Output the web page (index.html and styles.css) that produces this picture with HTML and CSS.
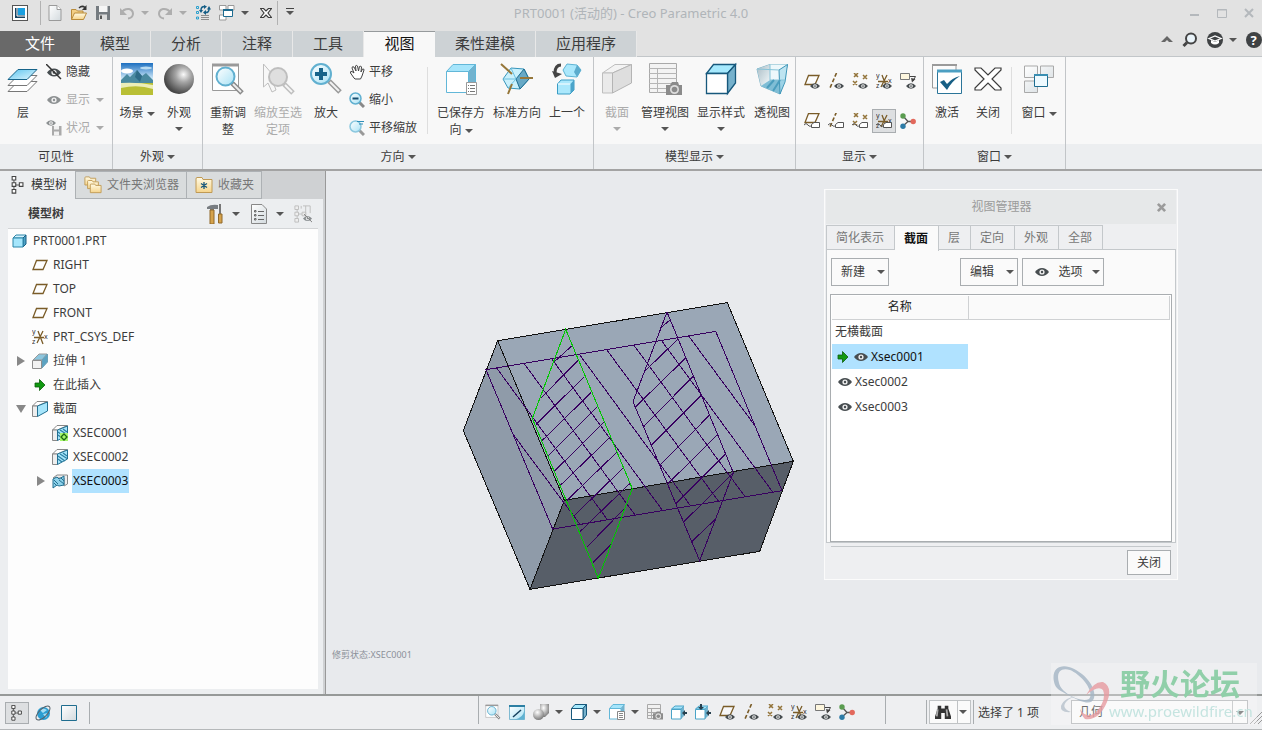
FILE: index.html
```html
<!DOCTYPE html>
<html lang="zh-CN">

<head>
    <meta charset="UTF-8">
    <meta name="viewport" content="width=device-width, initial-scale=1.0">
    <title>PRT0001 (活动的) - Creo Parametric 4.0</title>
    <link rel="stylesheet" href="styles.css">
</head>

<body>
    <!-- icons -->
    <svg class="sprite" aria-hidden="true">
        <defs>
            <linearGradient id="gBlue" x1="0" y1="0" x2="1" y2="1">
                <stop offset="0" stop-color="#5bc4ee"/><stop offset="1" stop-color="#e2f7ff"/>
            </linearGradient>
            <linearGradient id="gGlass" x1="0" y1="0" x2="1" y2="1">
                <stop offset="0" stop-color="#ffffff"/><stop offset="1" stop-color="#a9e2f5"/>
            </linearGradient>
            <linearGradient id="gPaper" x1="0" y1="0" x2="1" y2="1">
                <stop offset="0" stop-color="#ffffff"/><stop offset="1" stop-color="#d3dade"/>
            </linearGradient>
            <linearGradient id="gFolder" x1="0" y1="0" x2="0" y2="1">
                <stop offset="0" stop-color="#fffbe6"/><stop offset="1" stop-color="#f6d48a"/>
            </linearGradient>
            <linearGradient id="gSky" x1="0" y1="0" x2="0" y2="1">
                <stop offset="0" stop-color="#1c6fc0"/><stop offset="0.5" stop-color="#d4ecfa"/>
            </linearGradient>
            <linearGradient id="gBack" x1="0" y1="0" x2="1" y2="1">
                <stop offset="0" stop-color="#a9bcc5"/><stop offset="1" stop-color="#f2f9fb"/>
            </linearGradient>
            <radialGradient id="gBall" cx="0.65" cy="0.35" r="0.65">
                <stop offset="0" stop-color="#fafafa"/><stop offset="0.4" stop-color="#a5a5a5"/><stop offset="1" stop-color="#484848"/>
            </radialGradient>
            <radialGradient id="gBall2" cx="0.4" cy="0.3" r="0.7">
                <stop offset="0" stop-color="#ffffff"/><stop offset="1" stop-color="#7c7c7c"/>
            </radialGradient>
        </defs>

        <symbol id="eye" viewBox="0 0 14 8">
            <path d="M0 4Q3 0 7 0T14 4Q11 8 7 8T0 4Z" fill="#474d50"/>
            <circle cx="7" cy="4" r="2.6" fill="#eee"/><circle cx="7" cy="4" r="1.2" fill="#474d50"/>
        </symbol>
        <symbol id="tag" viewBox="0 0 16 8">
            <path d="M0 4Q2 1 4 4T9 3" fill="none" stroke="#555" stroke-width="1"/>
            <path d="M7.500 3.500L10 1.500H15.500V6.500H7.500Z" fill="#fff" stroke="#555"/>
        </symbol>
        <symbol id="logo" viewBox="0 0 16 16">
            <rect x="0.500" y="0.500" width="15" height="15" fill="#fff" stroke="#555"/>
            <rect x="3" y="3" width="10" height="10" fill="#17415e"/><path d="M6 3H13V10H6Z" fill="#1a9fe0"/><path d="M5 3V11H13" fill="none" stroke="#fff"/>
        </symbol>
        <symbol id="new" viewBox="0 0 16 16">
            <path d="M2 .5H10L14 4.500V15.500H2Z" fill="url(#gPaper)" stroke="#9a9a9a"/><path d="M10 .5V4.500H14" fill="#fff" stroke="#9a9a9a"/>
        </symbol>
        <symbol id="open" viewBox="0 0 16 16">
            <path d="M.5 14.500V4.500H5L6.500 6H12V8" fill="#f2cf86" stroke="#b98b3b"/>
            <path d="M.5 14.500L3.500 8H15.500L12.500 14.500Z" fill="url(#gFolder)" stroke="#b98b3b"/>
            <path d="M8 3Q11 0 14 2.500" fill="none" stroke="#333" stroke-width="1.500"/><path d="M15.500 0V5H11Z" fill="#333"/>
        </symbol>
        <symbol id="save" viewBox="0 0 16 16">
            <path d="M1 1H15V15H1Z" fill="#757b80"/><path d="M4 1H12.500V7H4Z" fill="#f6f6f6"/><path d="M4 9.500H12V15H4Z" fill="#dcdcdc"/><path d="M5 10.500H7V14H5Z" fill="#555"/>
        </symbol>
        <symbol id="undo" viewBox="0 0 16 16">
            <path d="M2 8Q5 3.500 10 4Q14 5 14 9Q13.500 13 9 13.500" fill="none" stroke="#8c8c8c" stroke-width="2"/><path d="M1 3V10H8Z" fill="#8c8c8c"/>
        </symbol>
        <symbol id="redo" viewBox="0 0 16 16">
            <path d="M14 8Q11 3.500 6 4Q2 5 2 9Q2.500 13 7 13.500" fill="none" stroke="#8c8c8c" stroke-width="2"/><path d="M15 3V10H8Z" fill="#8c8c8c"/>
        </symbol>
        <symbol id="regen" viewBox="0 0 16 16">
            <path d="M1.500 1.500H3.500V3.500H1.500ZM1.500 6.500H3.500V8.500H1.500ZM1.500 12H3.500V14H1.500Z" fill="none" stroke="#2aa0cf"/>
            <path d="M6 10.500H14M6 14.500H14M6 12.500H14" stroke="#8d8d8d"/>
            <path d="M6 5Q6 1.500 9.500 1.500M14 4Q14 8 10 7.500" fill="none" stroke="#155e86" stroke-width="1.500"/><path d="M9 0L12 1.500L9 4ZM11 5L8 7.500L11 10ZM4 5H8L6 8ZM12 4.500H16L14 1Z" fill="#155e86"/>
        </symbol>
        <symbol id="wins" viewBox="0 0 16 16">
            <path d="M.5 .5H7V5H.5ZM9 .5H15V5H9ZM.5 10H7V15H.5Z" fill="#fff" stroke="#999"/>
            <path d="M4.500 4.500H13.500V11.500H4.500Z" fill="#fff" stroke="#1d6c90"/><path d="M4 5H14" stroke="#1d6c90" stroke-width="2"/>
        </symbol>
        <symbol id="cross" viewBox="0 0 34 34">
            <path d="M4 6H10L17 13L24 6H30V8L21 17L30 26V28H24L17 21L10 28H4V26L13 17L4 8Z" fill="#fff" stroke="#3c3c3c" stroke-width="1.200"/>
        </symbol>
        <symbol id="crossSmall" viewBox="0 0 12 10">
            <path d="M.5 .5H3.500L6 3L8.500 .5H11.500L8 5L11.500 9.500H8.500L6 7L3.500 9.500H.5L4 5Z" fill="#fff" stroke="#3c3c3c" stroke-width="1.200"/>
        </symbol>
        <symbol id="up" viewBox="0 0 12 12"><path d="M0 8L6 2L12 8H8L6 6L4 8Z" fill="#666"/></symbol>
        <symbol id="search" viewBox="0 0 16 16"><circle cx="9" cy="6.500" r="5" fill="#eaf4fa" stroke="#444" stroke-width="2"/><path d="M5 10.500L1.500 14" stroke="#444" stroke-width="3"/></symbol>
        <symbol id="learn" viewBox="0 0 16 16">
            <circle cx="8" cy="8" r="8" fill="#3f4244"/><path d="M2 6.500L8 4L14 6.500L8 9Z" fill="none" stroke="#fff" stroke-width="1.300"/><path d="M4 8V11Q8 14 12 11V8L8 10Z" fill="#fff"/>
        </symbol>
        <symbol id="help" viewBox="0 0 16 16"><circle cx="8" cy="8" r="8" fill="#3f4244"/><text x="4.500" y="13" font-size="13" font-weight="bold" fill="#fff">?</text></symbol>

        <symbol id="layers" viewBox="0 0 34 34">
            <path d="M12 19.500H31L21 29.500H2Z" fill="#fff" stroke="#777"/>
            <path d="M12 13.500H31L21 23.500H2Z" fill="#fff" stroke="#777"/>
            <path d="M12 7.500H31L21 17.500H2Z" fill="url(#gBlue)" stroke="#17648a"/>
        </symbol>
        <symbol id="hide" viewBox="0 0 16 16"><use href="#eye" x="1" y="4" width="14" height="9"/><path d="M0 0L15 15" stroke="#333" stroke-width="1.500"/></symbol>
        <symbol id="show" viewBox="0 0 16 16"><use href="#eye" x="1" y="4" width="14" height="8"/></symbol>
        <symbol id="status" viewBox="0 0 16 16"><use href="#eye" x="0" y="0" width="10" height="6"/><path d="M6 6H15.500V15.500H6Z" fill="#777"/><path d="M8 6H13V9.500H8ZM8 11.500H13V15.500H8Z" fill="#eee"/></symbol>
        <symbol id="scene" viewBox="0 0 34 34">
            <path d="M1 1H33V33H1Z" fill="url(#gSky)"/><ellipse cx="7" cy="9" rx="6" ry="2.500" fill="#fff"/><ellipse cx="26" cy="6" rx="6" ry="1.500" fill="#b9dcf2"/>
            <path d="M1 18L7 12L10 15L17 8L22 14L26 11L33 18V22H1Z" fill="#4a8aa0"/><path d="M17 8L22 14L20 20L15 15Z" fill="#2e6b87"/>
            <path d="M1 21H33V33H1Z" fill="#b9bf35"/><path d="M1 21Q18 20 33 23V27Q18 22 1 26Z" fill="#eceeb8"/>
        </symbol>
        <symbol id="sphere" viewBox="0 0 34 34"><circle cx="17" cy="17" r="15" fill="url(#gBall)"/></symbol>
        <symbol id="refit" viewBox="0 0 34 34">
            <path d="M1.500 2.500H27.500V28.500H1.500Z" fill="#fff" stroke="#9a9a9a"/><path d="M1 3H28" stroke="#9a9a9a" stroke-width="3"/>
            <path d="M21 21L31 31" stroke="#8a8a8a" stroke-width="5"/><path d="M22 22L30 30" stroke="#eee" stroke-width="2"/>
            <circle cx="14.500" cy="14.500" r="9" fill="url(#gGlass)" stroke="#61b0d0" stroke-width="2"/>
        </symbol>
        <symbol id="zoomsel" viewBox="0 0 34 34">
            <path d="M2.500 2V25L7 21L11 30L15 28L12 20H18Z" fill="#f7f7f7" stroke="#999"/>
            <path d="M23 22L32 31" stroke="#999" stroke-width="5"/><path d="M24 23L31 30" stroke="#f5f5f5" stroke-width="2"/>
            <circle cx="17" cy="15" r="9" fill="#cfcfcf" stroke="#999" stroke-width="2"/>
        </symbol>
        <symbol id="zoomin" viewBox="0 0 34 34">
            <path d="M20 19L31 30" stroke="#999" stroke-width="5"/><path d="M21 20L30 29" stroke="#f2f2f2" stroke-width="2"/>
            <circle cx="12" cy="12" r="10" fill="url(#gGlass)" stroke="#61b0d0" stroke-width="2"/><path d="M12 6V18M6 12H18" stroke="#17648a" stroke-width="4"/>
        </symbol>
        <symbol id="hand" viewBox="0 0 16 16">
            <path d="M5 14L1.500 9Q1 7 3 7.500L5 9L3 4Q3 2 5 3L7 7L6.500 2Q7 .5 8.500 2L9.500 7L10.500 2.500Q12 1.500 12.500 3L12 8L13.500 5Q15 4.500 15 6L13 12L11.500 15H6Z" fill="#fff" stroke="#444"/>
        </symbol>
        <symbol id="zoomout" viewBox="0 0 16 16">
            <path d="M10 10L15 15" stroke="#888" stroke-width="3"/><circle cx="6.500" cy="6.500" r="5.500" fill="url(#gGlass)" stroke="#61b0d0" stroke-width="1.500"/><path d="M3.500 6.500H9.500" stroke="#174f70" stroke-width="2"/>
        </symbol>
        <symbol id="panzoom" viewBox="0 0 16 16">
            <path d="M10 10L15 15" stroke="#999" stroke-width="3"/><circle cx="6.500" cy="6.500" r="5.500" fill="url(#gGlass)" stroke="#8cc8df" stroke-width="1.500"/><path d="M8 1.500H15M10 4H14" stroke="#2f8fb8"/>
        </symbol>
        <symbol id="list" viewBox="0 0 11 13"><path d="M.5 .5H10.500V12.500H.5Z" fill="#fff" stroke="#999"/><path d="M2 3.500H3M2 6.500H3M2 9.500H3M4 3.500H9M4 6.500H9M4 9.500H9" stroke="#777"/></symbol>
        <symbol id="saved" viewBox="0 0 34 34">
            <path d="M2.500 9.500L9 2.500H31.500L24.500 9.500Z" fill="#a6e5fb" stroke="#62b7d8"/><path d="M24.500 9.500L31.500 2.500V23L24.500 30.500Z" fill="#72b3cf" stroke="#62b7d8"/>
            <path d="M2.500 9.500H24.500V30.500H2.500Z" fill="#fff" stroke="#62b7d8"/><use href="#list" x="22" y="20" width="11" height="13"/>
        </symbol>
        <symbol id="savedSmall" viewBox="0 0 16 16">
            <path d="M.5 4.500L4 .5H15.500L12 4.500Z" fill="#a6e5fb" stroke="#62b7d8"/><path d="M12 4.500L15.500 .5V9H12Z" fill="#72b3cf"/><path d="M.5 4.500H12V15H.5Z" fill="#fff" stroke="#62b7d8"/>
            <path d="M8.500 7.500H15.500V15.500H8.500Z" fill="#fff" stroke="#888"/><path d="M10 9.500H14M10 11.500H14M10 13.500H14" stroke="#888"/>
        </symbol>
        <symbol id="stdview" viewBox="0 0 34 34">
            <path d="M3 17L11 6L24 7L29 17L20 27L8 26Z" fill="#c9f0fc" stroke="#3795bb"/><path d="M16 17L24 7L29 17L20 27Z" fill="#67a9c6" stroke="#1d6c90"/><path d="M3 17L16 17L11 6M8 26L16 17" fill="none" stroke="#6cc0df"/>
            <path d="M1 2L12 12M20 16H33M12 22L8 32" stroke="#96773a" stroke-width="2"/>
        </symbol>
        <symbol id="prev" viewBox="0 0 34 34">
            <path d="M13 8L17 2L27 3L31 8L27 15L16 14Z" fill="#abe8fc" stroke="#5fb4d4"/><path d="M27 3L31 8L27 15L24 10Z" fill="#5caccd"/>
            <path d="M7.500 22L11 18H24V28L20 32H7.500Z" fill="#abe8fc" stroke="#3a9cc4"/><path d="M20.500 22L24 18V28L20.500 31.500Z" fill="#4ba4ca"/><path d="M8 22H20" stroke="#fff"/>
            <path d="M11 3Q5 3 5 11" fill="none" stroke="#444" stroke-width="3"/><path d="M2 9L12 12L5 16Z" fill="#444"/>
        </symbol>
        <symbol id="section" viewBox="0 0 34 34">
            <path d="M2.500 11L15 2.500H31.500L12.500 11Z" fill="#f0f0f0" stroke="#999"/><path d="M2.500 11H12.500V31H2.500Z" fill="#e2e2e2" stroke="#999"/><path d="M12.500 11L31.500 2.500V21L12.500 31Z" fill="#cdcdcd" stroke="#888"/>
        </symbol>
        <symbol id="camera" viewBox="0 0 16 13"><path d="M0 3H4L6 0H12L13 3H16V13H0Z" fill="#8b8b8b"/><circle cx="8.500" cy="7.500" r="4.500" fill="#dedede"/><circle cx="8.500" cy="7.500" r="2.800" fill="#8b8b8b"/></symbol>
        <symbol id="viewmgr" viewBox="0 0 34 34">
            <path d="M1.500 1.500H28.500V30.500H1.500Z" fill="#f3f3f3" stroke="#a9a9a9"/><path d="M1 6.500H29M1 11.500H29M1 16.500H29M1 21.500H29M1 26.500H29M9.500 6V31" stroke="#b5b5b5"/>
            <use href="#camera" x="18" y="20" width="16" height="13"/>
        </symbol>
        <symbol id="viewmgrSmall" viewBox="0 0 16 16">
            <path d="M.5 .5H13.500V14.500H.5ZM0 4.500H14M0 8.500H14M0 11.500H14M4.500 4V15" fill="#f0f0f0" stroke="#a9a9a9"/><use href="#camera" x="6" y="7" width="10" height="9"/>
        </symbol>
        <symbol id="cube" viewBox="0 0 34 34">
            <path d="M2.500 11.500L9.500 2.500H31.500L23.500 11.500Z" fill="#a6e9fd" stroke="#17587c" stroke-width="1.300"/><path d="M23.500 11.500L31.500 2.500V21L23.500 31.500Z" fill="#76b1cc" stroke="#17587c" stroke-width="1.300"/><path d="M2.500 11.500H23.500V31.500H2.500Z" fill="#fff" stroke="#17587c" stroke-width="1.300"/>
        </symbol>
        <symbol id="cubeSmall" viewBox="0 0 16 16">
            <path d="M.5 4.500L4 .5H15.500L12 4.500Z" fill="#a6e9fd" stroke="#17587c"/><path d="M12 4.500L15.500 .5V11L12 15.500Z" fill="#76b1cc" stroke="#17587c"/><path d="M.5 4.500H12V15.500H.5Z" fill="#fff" stroke="#17587c"/>
        </symbol>
        <symbol id="persp" viewBox="0 0 34 34">
            <path d="M2 7L15 2.500H32.500L25 32L6 24Z" fill="#e9f6fa" stroke="#79b3c8"/><path d="M2 7L15 2.500V18L6 24Z" fill="url(#gBack)"/><path d="M15 2.500H32V18H15Z" fill="#edf8fb"/><path d="M6 24L15 18H30L25 32Z" fill="#7fbdd5"/>
            <path d="M24 8L32.500 2.500L30 20L25 32Z" fill="#a8dcec" fill-opacity="0.700" stroke="#3f96b8"/><path d="M2 7L24 8M15 2.500V18H30" fill="none" stroke="#86c3d8"/><path d="M12 26L19 18M18 29L25 18" stroke="#4b9dbd" stroke-width="2"/>
        </symbol>
        <symbol id="activate" viewBox="0 0 34 34">
            <path d="M2.500 3H26V26H2.500Z" fill="#fbfbfb" stroke="#9a9a9a"/><path d="M2 3H27" stroke="#9a9a9a" stroke-width="2"/>
            <path d="M7.500 8.500H31.500V31.500H7.500Z" fill="#fff" stroke="#2b7599"/><path d="M7 9H32" stroke="#4c9fc2" stroke-width="3"/><path d="M10 20L14 18L17 22Q22 16 30 14Q22 19 17 28Z" fill="#175f85"/>
        </symbol>
        <symbol id="windows" viewBox="0 0 34 34">
            <path d="M2.500 4H15.500V15.500H2.500ZM18.500 4H31.500V15.500H18.500ZM2.500 19H15.500V30.500H2.500Z" fill="url(#gPaper)" stroke="#a9a9a9"/>
            <path d="M12.500 13H25.500V24.500H12.500Z" fill="#eefaff" stroke="#1d6c90"/><path d="M12 13H26" stroke="#3a8fb3" stroke-width="2"/>
        </symbol>

        <!-- datum display icons -->
        <symbol id="plane" viewBox="0 0 16 16"><path d="M4.500 3.500H15L11 12.500H1Z" fill="#fff" fill-opacity="0.500" stroke="#7a5c28" stroke-width="1.300"/></symbol>
        <symbol id="axis" viewBox="0 0 16 16"><path d="M8.500 0L2 15" stroke="#7a5c28" stroke-width="1.600" stroke-dasharray="4 2"/></symbol>
        <symbol id="points" viewBox="0 0 16 16"><path d="M2 0L6 4M6 0L2 4M11 2L15 6M15 2L11 6M1 8L5 12M5 8L1 12" stroke="#93743a" stroke-width="1.500"/></symbol>
        <symbol id="csys" viewBox="0 0 16 16">
            <path d="M2 8.500H12M6 2L11 15M11 2L5 14" stroke="#7a5c28" stroke-width="1.300"/>
            <text x="0" y="5" font-size="7" fill="#333">y</text><text x="12" y="10" font-size="7" fill="#333">x</text><text x="0" y="15" font-size="7" fill="#333">z</text>
        </symbol>
        <symbol id="anno" viewBox="0 0 16 16"><path d="M.5 .5H9.500V6.500H.5Z" fill="#fdf6de" stroke="#777"/><path d="M10 3.500H15.500L13 8" fill="none" stroke="#444"/><path d="M11 5L15.500 6L12 9.500Z" fill="#444"/></symbol>
        <symbol id="planeEye" viewBox="0 0 16 16"><use href="#plane" y="-1" width="16" height="16"/><use href="#eye" x="6" y="10" width="10" height="6"/></symbol>
        <symbol id="axisEye" viewBox="0 0 16 16"><use href="#axis" width="16" height="16"/><use href="#eye" x="6" y="10" width="10" height="6"/></symbol>
        <symbol id="pointsEye" viewBox="0 0 16 16"><use href="#points" width="16" height="16"/><use href="#eye" x="6" y="10" width="10" height="6"/></symbol>
        <symbol id="csysEye" viewBox="0 0 16 16"><use href="#csys" width="16" height="16"/><use href="#eye" x="6" y="10" width="10" height="6"/></symbol>
        <symbol id="annoEye" viewBox="0 0 16 16"><use href="#anno" width="16" height="16"/><use href="#eye" x="6" y="10" width="10" height="6"/></symbol>
        <symbol id="planeTag" viewBox="0 0 16 16"><use href="#plane" y="-3" width="16" height="16"/><use href="#tag" y="8" width="16" height="8"/></symbol>
        <symbol id="axisTag" viewBox="0 0 16 16"><use href="#axis" y="-1" width="16" height="16"/><use href="#tag" y="8" width="16" height="8"/></symbol>
        <symbol id="pointsTag" viewBox="0 0 16 16"><use href="#points" width="16" height="16"/><use href="#tag" y="8" width="16" height="8"/></symbol>
        <symbol id="csysTag" viewBox="0 0 16 16"><use href="#csys" width="16" height="16"/><use href="#tag" y="8" width="16" height="8"/></symbol>
        <symbol id="spin" viewBox="0 0 16 16"><path d="M3 3L8 8.500L3 13M8 8.500H13" fill="none" stroke="#555" stroke-width="1.300"/><circle cx="3" cy="3" r="2.700" fill="#5a9c50"/><circle cx="13.200" cy="8.500" r="2.700" fill="#e2685c"/><circle cx="3" cy="13.300" r="2.700" fill="#2d7ba6"/></symbol>

        <!-- navigator icons -->
        <symbol id="nodes" viewBox="0 0 16 20"><path d="M3.500 3V17M4 10H11" stroke="#444"/><path d="M1.500 .5H5.500V4.500H1.500ZM1.500 7.500H5.500V11.500H1.500ZM1.500 15H5.500V19H1.500ZM9.500 7.500H13.500V11.500H9.500Z" fill="#fff" stroke="#444" stroke-width="1.200"/></symbol>
        <symbol id="folders" viewBox="0 0 20 20">
            <path d="M1 10V2Q1 1 2 1H6L7 2.500H13V10Z" fill="url(#gFolder)" stroke="#c09a55"/><path d="M4 14V6Q4 5 5 5H9L10 6.500H16V14Z" fill="url(#gFolder)" stroke="#c09a55"/><path d="M7 18.500V10Q7 9 8 9H12L13 10.500H19V18.500Z" fill="url(#gFolder)" stroke="#c09a55"/>
        </symbol>
        <symbol id="fav" viewBox="0 0 18 18"><path d="M1 16.500V3Q1 1.500 2 1.500H7L8 3.500H17V16.500Z" fill="url(#gFolder)" stroke="#c09a55"/><path d="M9 6V13M6 7.500L12 11.500M12 7.500L6 11.500" stroke="#17587c" stroke-width="1.300"/></symbol>
        <symbol id="tools" viewBox="0 0 18 20"><path d="M1 3Q5 0 12 1V5H8V7H4V5L1 5Z" fill="#787d82"/><path d="M4 6H8V20H4Z" fill="#d5a24b" stroke="#90692a"/><path d="M14 0V10" stroke="#777" stroke-width="2"/><path d="M12.500 10H16V19H12.500Z" fill="#d5a24b" stroke="#90692a"/></symbol>
        <symbol id="sheet" viewBox="0 0 16 20"><path d="M.5 .5H11L15.500 5V19.500H.5Z" fill="url(#gPaper)" stroke="#888"/><path d="M7 7.500H13M7 11.500H13M7 15.500H13" stroke="#666"/><path d="M3.500 6.500H5V8H3.500ZM3.500 10.500H5V12H3.500ZM3.500 14.500H5V16H3.500Z" fill="none" stroke="#666"/></symbol>
        <symbol id="filter" viewBox="0 0 20 20"><path d="M3.500 3V17M4 10H11M8 1V4M13 1V12M18 1V9M10 1H18" fill="none" stroke="#bbb"/><path d="M1 1H5V5H1ZM1 8H5V12H1ZM1 15H5V19H1ZM9 8H13V12H9Z" fill="#eee" stroke="#bbb"/><use href="#eye" x="10" y="12" width="10" height="6" opacity="0.600"/><path d="M11 10L20 19" stroke="#777"/></symbol>
        <symbol id="part" viewBox="0 0 16 16"><path d="M1 5L4 2H14L11 5Z" fill="#d2f3ff" stroke="#2d86a9"/><path d="M11 5L14 2V11L11 14Z" fill="#4da2c5" stroke="#175f85"/><path d="M1 5H11V14H1Z" fill="#a5e6fc" stroke="#2d86a9"/></symbol>
        <symbol id="extrude" viewBox="0 0 16 16"><path d="M1 7L7 1H15L10 7Z" fill="#8cc6de" stroke="#999"/><path d="M10 7L15.500 1V9L10 15Z" fill="#5ba3c2" stroke="#6aa0b8"/><path d="M.5 7.500H9.500V15.500H.5Z" fill="#f2f2f2" stroke="#8e8e8e"/></symbol>
        <symbol id="arrow" viewBox="0 0 12 12"><path d="M1 4H5.500V.5L11 6L5.500 11.500V8H1Z" fill="#119a11" stroke="#0c5d0c" stroke-width="0.800"/></symbol>
        <symbol id="sec" viewBox="0 0 16 16"><path d="M.5 5L5 .5H15.500L5.500 5Z" fill="#fff" stroke="#888"/><path d="M.5 5H5.500V15.500H.5Z" fill="#eee" stroke="#888"/><path d="M5.500 5L15.500 1V10L5.500 15.500Z" fill="#a6e5fb" stroke="#226f91"/></symbol>
        <symbol id="sech" viewBox="0 0 16 16"><use href="#sec" width="16" height="16"/><path d="M6 7L13 12M6 10L10 13M8 5L15 9.500M11 4L15 7" stroke="#2c7fa3" stroke-width="1.200"/></symbol>
        <symbol id="sechActive" viewBox="0 0 16 16"><use href="#sech" width="16" height="16"/><path d="M8 8H16V16H8Z" fill="#a5f56b"/><path d="M12 9L15 12L12 15L9 12Z" fill="none" stroke="#1d6a10" stroke-width="1.300"/></symbol>
        <symbol id="sech2" viewBox="0 0 16 16"><path d="M1 5L5 2H15.500V11L12 13V5Z" fill="#eee" stroke="#888"/><path d="M1 6L5 4L7 6L12 3V12L7 13L5 12L1 15Z" fill="#8ed2ea" stroke="#226f91"/><path d="M2 7L6 11M2 10L5 13M7 7L12 11M9 5L12 8" stroke="#226f91"/></symbol>

        <!-- status bar icons -->
        <symbol id="globe" viewBox="0 0 16 16"><circle cx="8.500" cy="8.500" r="6.500" fill="#2b9ed2"/><path d="M5 5Q8 2 12 5L8 8ZM8 9L13 8L11 13Z" fill="#a5ddf4"/><ellipse cx="8" cy="8" rx="9" ry="4" transform="rotate(-45 8 8)" fill="none" stroke="#56616a"/></symbol>
        <symbol id="blank" viewBox="0 0 16 16"><path d="M.5 .5H15.500V15.500H.5Z" fill="url(#gPaper)" stroke="#1f6d8f"/></symbol>
        <symbol id="repaint" viewBox="0 0 16 16"><path d="M.5 1.500H15.500V15.500H.5Z" fill="url(#gGlass)" stroke="#7fbad2"/><path d="M0 2H16" stroke="#2c7fa3" stroke-width="2"/><path d="M6 15.500Q14 14 15.500 6V15.500Z" fill="#5fb1d1"/><path d="M4 13L12 6" stroke="#17415e" stroke-width="1.500"/></symbol>
        <symbol id="shade" viewBox="0 0 16 16"><path d="M7 0H16V9L12 13H7Z" fill="url(#gBall2)"/><circle cx="5.500" cy="10.500" r="5.500" fill="url(#gBall2)"/></symbol>
        <symbol id="boxin" viewBox="0 0 16 16"><path d="M.5 5L4 2H13L10 5Z" fill="#a6e5fb" stroke="#4aa4c8"/><path d="M10 5L13 2V12L10 15Z" fill="#72b3cf"/><path d="M.5 5.500H10V15H.5Z" fill="#fff" stroke="#4aa4c8"/><path d="M11 9L14 6V8H16V10H14V12Z" fill="#26404f"/></symbol>
        <symbol id="boxin2" viewBox="0 0 16 16"><use href="#boxin" width="16" height="16"/><path d="M3 3H9L6 6ZM5 0H7V3H5Z" fill="#26404f"/></symbol>
        <symbol id="binoc" viewBox="0 0 18 16"><path d="M3 1H7V4H11V1H15V4L18 13V16H11V9H7V16H0V13L3 4Z" fill="#333"/><path d="M3 5L2 13M13 5L14 13" stroke="#aaa" stroke-width="2"/></symbol>
    </svg>

    <header class="titlebar">
        <div class="quick">
            <button class="qbtn logo" aria-label="Creo"><svg><use href="#logo"/></svg></button>
            <button class="qbtn"><svg><use href="#new"/></svg></button>
            <button class="qbtn"><svg><use href="#open"/></svg></button>
            <button class="qbtn"><svg><use href="#save"/></svg></button>
            <button class="qbtn wide off"><svg><use href="#undo"/></svg><i class="caret"></i></button>
            <button class="qbtn wide off"><svg><use href="#redo"/></svg><i class="caret"></i></button>
            <button class="qbtn"><svg><use href="#regen"/></svg></button>
            <button class="qbtn wide"><svg><use href="#wins"/></svg><i class="caret"></i></button>
            <button class="qbtn close"><svg><use href="#crossSmall"/></svg></button>
            <button class="qbtn more"><i class="caret"></i></button>
        </div>
        <h1 class="title">PRT0001 (活动的) - Creo Parametric 4.0</h1>
        <div class="winbtns">
            <button aria-label="最小化"><svg viewBox="0 0 10 10"><path d="M0 7H9" stroke="#b4b8bc" stroke-width="2"/></svg></button>
            <button aria-label="最大化"><svg viewBox="0 0 10 10"><path d="M.5 1.500H9.500V9.500H.5ZM0 2H10" fill="none" stroke="#b4b8bc"/></svg></button>
            <button aria-label="退出"><svg viewBox="0 0 10 10"><path d="M1 1L9 9M9 1L1 9" stroke="#b4b8bc" stroke-width="2"/></svg></button>
        </div>
    </header>

    <nav class="tabs">
        <button class="tab file">文件</button>
        <button class="tab">模型</button>
        <button class="tab">分析</button>
        <button class="tab">注释</button>
        <button class="tab">工具</button>
        <button class="tab active">视图</button>
        <button class="tab long">柔性建模</button>
        <button class="tab long">应用程序</button>
        <div class="helpers">
            <button><svg class="small"><use href="#up"/></svg></button>
            <button><svg><use href="#search"/></svg></button>
            <button><svg><use href="#learn"/></svg><i class="caret"></i></button>
            <button><svg><use href="#help"/></svg></button>
        </div>
    </nav>

    <section class="ribbon">
        <div class="group">
            <div class="tools">
                <button class="big w46"><svg><use href="#layers"/></svg><span>层</span></button>
                <div class="stack">
                    <button><svg><use href="#hide"/></svg>隐藏</button>
                    <button class="off"><svg><use href="#show"/></svg>显示<i class="caret"></i></button>
                    <button class="off"><svg><use href="#status"/></svg>状况<i class="caret"></i></button>
                </div>
            </div>
            <div class="name">可见性</div>
        </div>
        <div class="group loose">
            <div class="tools">
                <button class="big w48"><svg><use href="#scene"/></svg><span>场景 <i class="caret"></i></span></button>
                <button class="big w36"><svg><use href="#sphere"/></svg><span>外观</span><i class="caret"></i></button>
            </div>
            <div class="name">外观<i class="caret"></i></div>
        </div>
        <div class="group">
            <div class="tools">
                <button class="big w50"><svg><use href="#refit"/></svg><span>重新调<br>整</span></button>
                <button class="big w50 off"><svg><use href="#zoomsel"/></svg><span>缩放至选<br>定项</span></button>
                <button class="big w46"><svg><use href="#zoomin"/></svg><span>放大</span></button>
                <div class="stack">
                    <button><svg><use href="#hand"/></svg>平移</button>
                    <button><svg><use href="#zoomout"/></svg>缩小</button>
                    <button><svg><use href="#panzoom"/></svg>平移缩放</button>
                </div>
                <div class="rule"></div>
                <button class="big w58"><svg><use href="#saved"/></svg><span>已保存方<br>向 <i class="caret"></i></span></button>
                <button class="big w54"><svg><use href="#stdview"/></svg><span>标准方向</span></button>
                <button class="big w46"><svg><use href="#prev"/></svg><span>上一个</span></button>
            </div>
            <div class="name">方向<i class="caret"></i></div>
        </div>
        <div class="group">
            <div class="tools">
                <button class="big w46 off"><svg><use href="#section"/></svg><span>截面</span><i class="caret"></i></button>
                <button class="big w50"><svg><use href="#viewmgr"/></svg><span>管理视图</span><i class="caret"></i></button>
                <button class="big w62"><svg><use href="#cube"/></svg><span>显示样式</span><i class="caret"></i></button>
                <button class="big w40"><svg><use href="#persp"/></svg><span>透视图</span></button>
            </div>
            <div class="name">模型显示<i class="caret"></i></div>
        </div>
        <div class="group">
            <div class="tools">
                <div class="datum">
                    <button><svg><use href="#planeEye"/></svg></button>
                    <button><svg><use href="#axisEye"/></svg></button>
                    <button><svg><use href="#pointsEye"/></svg></button>
                    <button><svg><use href="#csysEye"/></svg></button>
                    <button><svg><use href="#annoEye"/></svg></button>
                    <button><svg><use href="#planeTag"/></svg></button>
                    <button><svg><use href="#axisTag"/></svg></button>
                    <button><svg><use href="#pointsTag"/></svg></button>
                    <button class="pressed"><svg><use href="#csysTag"/></svg></button>
                    <button><svg><use href="#spin"/></svg></button>
                </div>
            </div>
            <div class="name">显示<i class="caret"></i></div>
        </div>
        <div class="group">
            <div class="tools">
                <button class="big w46"><svg><use href="#activate"/></svg><span>激活</span></button>
                <button class="big w36"><svg><use href="#cross"/></svg><span>关闭</span></button>
                <div class="rule"></div>
                <button class="big w46"><svg><use href="#windows"/></svg><span>窗口 <i class="caret"></i></span></button>
            </div>
            <div class="name">窗口<i class="caret"></i></div>
        </div>
        <div class="group rest">
            <div class="tools"></div>
            <div class="name"></div>
        </div>
    </section>

    <main class="work">
        <aside class="navigator">
            <div class="navtabs">
                <button class="active"><svg><use href="#nodes"/></svg>模型树</button>
                <button><svg><use href="#folders"/></svg>文件夹浏览器</button>
                <button><svg><use href="#fav"/></svg>收藏夹</button>
            </div>
            <div class="navbody">
                <div class="navhead">
                    <h2>模型树</h2>
                    <button><svg><use href="#tools"/></svg><i class="caret"></i></button>
                    <button><svg><use href="#sheet"/></svg><i class="caret"></i></button>
                    <button><svg><use href="#filter"/></svg></button>
                </div>
                <ul class="tree">
                    <li class="root"><svg><use href="#part"/></svg><span>PRT0001.PRT</span></li>
                    <li><svg><use href="#plane"/></svg><span>RIGHT</span></li>
                    <li><svg><use href="#plane"/></svg><span>TOP</span></li>
                    <li><svg><use href="#plane"/></svg><span>FRONT</span></li>
                    <li><svg><use href="#csys"/></svg><span>PRT_CSYS_DEF</span></li>
                    <li class="closed"><svg><use href="#extrude"/></svg><span>拉伸 1</span></li>
                    <li><svg class="ins"><use href="#arrow"/></svg><span>在此插入</span></li>
                    <li class="opened"><svg><use href="#sec"/></svg><span>截面</span></li>
                    <li class="sub"><svg><use href="#sechActive"/></svg><span>XSEC0001</span></li>
                    <li class="sub"><svg><use href="#sech"/></svg><span>XSEC0002</span></li>
                    <li class="sub closed selected"><svg><use href="#sech2"/></svg><span>XSEC0003</span></li>
                </ul>
            </div>
        </aside>

        <div class="viewport">
            <svg class="model" viewBox="0 0 1050 930">
                <path class="edge top" d="M143 152L832 38L1030 514L343 631Z"/>
                <path class="edge left" d="M143 152L40 422L240 898L343 631Z"/>
                <path class="edge front" d="M343 631L1030 514L929 784L240 898Z"/>
                <g class="cut">
                    <path d="M108 239L797 124L996 602L308 717Z"/>
                    <path d="M187 430L390 703M140 234L473 690M222 220L555 675M305 206L638 662M388 193L722 648M470 179L805 633M552 166L885 620M634 151L968 606M716 138L917 410"/>
                    <path d="M651 66L549 335L749 812L850 548Z"/>
                    <path d="M660 90L632 114M683 148L583 245M708 203L557 350M730 258L581 410M755 315L605 465M777 377L630 525M803 433L655 580M828 490L678 640M848 550L700 697M797 687L725 755"/>
                    <path d="M365 168L308 220M385 210L272 325M403 260L258 403M423 308L275 453M442 350L295 497M463 395L312 545M482 440L330 587M500 487L350 632M520 533L372 678M540 580L390 725M522 657L410 772M485 762L428 818"/>
                </g>
                <path class="cut picked" d="M347 118L247 385L445 865L547 596Z"/>
            </svg>
            <p class="state">修剪状态:XSEC0001</p>

            <section class="dialog">
                <header><h2>视图管理器</h2><button aria-label="关闭窗口"><svg viewBox="0 0 10 10"><path d="M1 1L9 9M9 1L1 9" stroke="#9b9b9b" stroke-width="3"/></svg></button></header>
                <div class="dtabs">
                    <button>简化表示</button>
                    <button class="active">截面</button>
                    <button>层</button>
                    <button>定向</button>
                    <button>外观</button>
                    <button>全部</button>
                </div>
                <div class="dbody">
                    <div class="dbar">
                        <button>新建<i class="caret"></i></button>
                        <button class="push">编辑<i class="caret"></i></button>
                        <button class="option"><svg><use href="#eye"/></svg>选项<i class="caret"></i></button>
                    </div>
                    <div class="dlist">
                        <table>
                            <thead>
                                <tr><th>名称</th><th class="fill"></th></tr>
                            </thead>
                            <tbody>
                                <tr><td>无横截面</td><td></td></tr>
                                <tr class="selected"><td><svg class="go"><use href="#arrow"/></svg><svg><use href="#eye"/></svg>Xsec0001</td><td></td></tr>
                                <tr><td><svg><use href="#eye"/></svg>Xsec0002</td><td></td></tr>
                                <tr><td><svg><use href="#eye"/></svg>Xsec0003</td><td></td></tr>
                            </tbody>
                        </table>
                    </div>
                </div>
                <footer><button>关闭</button></footer>
            </section>
        </div>
    </main>

    <footer class="status">
        <div class="left">
            <button class="pressed"><svg><use href="#nodes"/></svg></button>
            <button><svg><use href="#globe"/></svg></button>
            <button><svg><use href="#blank"/></svg></button>
        </div>
        <div class="center">
            <button><svg><use href="#refit"/></svg></button>
            <button><svg><use href="#repaint"/></svg></button>
            <button class="wide"><svg><use href="#shade"/></svg><i class="caret"></i></button>
            <button class="wide"><svg><use href="#cubeSmall"/></svg><i class="caret"></i></button>
            <button class="wide"><svg><use href="#savedSmall"/></svg><i class="caret"></i></button>
            <button><svg><use href="#viewmgrSmall"/></svg></button>
            <button><svg><use href="#boxin"/></svg></button>
            <button><svg><use href="#boxin2"/></svg></button>
            <button><svg><use href="#planeEye"/></svg></button>
            <button><svg><use href="#axisEye"/></svg></button>
            <button><svg><use href="#pointsEye"/></svg></button>
            <button><svg><use href="#csysEye"/></svg></button>
            <button><svg><use href="#annoEye"/></svg></button>
            <button><svg><use href="#spin"/></svg></button>
        </div>
        <div class="find">
            <button class="binoc"><svg><use href="#binoc"/></svg><i class="caret"></i></button>
        </div>
        <div class="count">选择了 1 项</div>
        <div class="pick">
            <select aria-label="选择过滤器"><option>几何</option></select>
            <i class="caret"></i>
        </div>
        <svg class="grip" viewBox="0 0 12 12"><path d="M0 12L12 0M4 12L12 4M8 12L12 8" stroke="#999"/></svg>
    </footer>

    <div class="watermark">
        <svg viewBox="0 0 60 60">
            <path fill-rule="evenodd" d="M4 22C-1 8 7 1 18 4C32 8 46 24 43 35C41 43 30 39 21 34C12 29 6 27 4 22ZM8 20C10 30 30 40 38 36C44 29 31 12 19 7C9 4 5 10 8 20Z" fill="#a3b4c3"/>
            <path d="M35 32Q43 18 52 19Q62 24 56 39Q48 58 34 56Q30 52 29 46Q35 56 44 50Q56 38 52 27Q47 22 35 32Z" fill="#e69a9f"/>
            <path d="M28 33Q13 34 10 43Q9 50 20 49Q10 45 15 39Q19 34 28 33Z" fill="#b6c1cc"/>
        </svg>
        <div>
            <strong>野火论坛</strong>
            <span>www.proewildfire.cn</span>
        </div>
    </div>
</body>

</html>
```

FILE: styles.css
```css
* {
    box-sizing: border-box;
}

body {
    margin: 0;
    min-height: 100vh;
    display: flex;
    flex-direction: column;
    background-color: #e2e2e2;
    color: #3c3c3c;
    font-family: "Noto Sans", "Noto Sans CJK SC", sans-serif;
    font-size: 12px;
    line-height: 16px;
    overflow: hidden;
}

button {
    display: flex;
    align-items: center;
    justify-content: center;
    margin: 0;
    padding: 0;
    border: 0;
    background: none;
    color: inherit;
    font: inherit;
    white-space: nowrap;
}

h1, h2, p, ul {
    margin: 0;
    padding: 0;
    font-size: 12px;
    font-weight: normal;
}

svg {
    width: 16px;
    height: 16px;
    flex: none;
    overflow: visible;
}

.sprite {
    position: absolute;
    width: 0;
    height: 0;
}

.caret {
    display: inline-block;
    flex: none;
    border: 4px solid transparent;
    border-top-color: #555;
    border-bottom: 0;
    vertical-align: middle;
}

.off {
    color: #ababab;
}

.off svg {
    opacity: 0.6;
}

.off .caret {
    border-top-color: #ababab;
}

/* title bar */
.titlebar {
    display: grid;
    grid-template-columns: 1fr auto 1fr;
    align-items: center;
    height: 26px;
}

.quick {
    display: flex;
    align-items: center;
}

.qbtn {
    width: 24px;
    height: 24px;
}

.qbtn.logo {
    width: 41px;
    margin-right: 2px;
    border-right: 1px solid #b2b2b2;
}

.qbtn.wide {
    width: 38px;
    gap: 6px;
}

.qbtn.close {
    margin-left: 1px;
    border-right: 1px solid #b2b2b2;
}

.qbtn.close svg {
    width: 12px;
    height: 10px;
}

.title {
    color: #b0b5b9;
    font-size: 13px;
}

.more .caret {
    position: relative;
}

.more .caret::before {
    content: "";
    position: absolute;
    left: -4px;
    top: -7px;
    width: 8px;
    height: 1px;
    background-color: #444;
}

.winbtns {
    display: flex;
    justify-content: flex-end;
    gap: 17px;
    padding-right: 8px;
}

.winbtns svg {
    width: 10px;
    height: 10px;
}

/* ribbon tabs */
.tabs {
    display: flex;
    align-items: flex-end;
    height: 31px;
    border-bottom: 1px solid #c2c6c9;
}

.tab {
    width: 71px;
    height: 26px;
    padding-bottom: 3px;
    border-right: 1px solid #e8e8e8;
    background-color: #cdd2d5;
    font-size: 15px;
    margin-bottom: -1px;
}

.tab.file {
    width: 80px;
    border: 0;
    background-color: #696969;
    color: #fff;
}

.tab.active {
    padding-bottom: 4px;
    border: 0;
    border-top: 1px solid #969a9c;
    background-color: #f8f8f8;
    color: #111;
}

.tab.long {
    width: 101px;
}

.helpers {
    display: flex;
    align-items: center;
    gap: 9px;
    height: 32px;
    margin-left: auto;
}

.helpers button {
    gap: 6px;
}

.helpers .small {
    width: 12px;
    height: 12px;
}

/* ribbon */
.ribbon {
    display: flex;
    height: 114px;
    border-bottom: 2px solid #a3a3a3;
}

.group {
    display: flex;
    flex-direction: column;
    padding-top: 1px;
    border-right: 1px solid #c2c5c8;
    background-color: #f8f8f8;
}

.group.rest {
    flex: 1;
    border: 0;
}

.tools {
    display: flex;
    height: 86px;
    padding-right: 3px;
}

.loose .tools {
    padding-right: 5px;
}

.name {
    display: flex;
    flex: 1;
    align-items: center;
    justify-content: center;
    gap: 3px;
    background-color: #eceef0;
}

.big {
    flex-direction: column;
    justify-content: flex-start;
    padding-top: 4px;
    line-height: 17px;
}

.big svg {
    width: 34px;
    height: 34px;
    margin-bottom: 8px;
}

.big > .caret {
    margin-top: 6px;
}

.w36 { width: 36px; }
.w40 { width: 40px; }
.w46 { width: 46px; }
.w48 { width: 48px; }
.w50 { width: 50px; }
.w54 { width: 54px; }
.w58 { width: 58px; }
.w62 { width: 62px; }

.stack {
    display: flex;
    flex-direction: column;
    padding-right: 5px;
}

.stack button {
    height: 28px;
    justify-content: flex-start;
    gap: 4px;
}

.stack .caret {
    margin-left: 2px;
}

.rule {
    width: 1px;
    height: 67px;
    margin: 9px 4px 0 5px;
    background-color: #dedede;
}

.datum {
    display: grid;
    grid-template-columns: repeat(5, 24px);
    grid-auto-rows: 24px;
    row-gap: 16px;
    padding: 11px 0 0 4px;
}

.pressed {
    border: 1px solid #a9adb0;
    background-color: #dddfe1;
}

/* work area */
.work {
    display: flex;
    flex: 1;
}

.navigator {
    display: flex;
    flex-direction: column;
    width: 326px;
    border-right: 1px solid #999;
    background-color: #cfd1d3;
}

.navtabs {
    display: flex;
    height: 28px;
}

.navtabs button {
    gap: 4px;
    padding: 0 7px;
    border: solid #adb1b4;
    border-width: 1px 1px 1px 0;
    background-color: #d9dcdd;
    color: #777;
}

.navtabs button.active {
    gap: 5px;
    padding: 0 8px 0 10px;
    border-width: 0 1px 0 0;
    background-color: #eceef0;
    color: #333;
}

.navtabs svg {
    width: 20px;
    height: 18px;
}

.navtabs .active svg {
    width: 16px;
}

.navbody {
    display: flex;
    flex: 1;
    flex-direction: column;
    margin-right: 2px;
    padding: 0 5px 5px 8px;
    background-color: #eceef0;
}

.navhead {
    display: flex;
    align-items: center;
    gap: 10px;
    height: 30px;
    padding: 0 6px 0 20px;
    border-bottom: 1px solid #d3d5d7;
}

.navhead h2 {
    flex: 1;
    font-weight: bold;
}

.navhead button {
    gap: 8px;
}

.navhead svg {
    width: 18px;
    height: 20px;
}

.tree {
    flex: 1;
    background-color: #fdfdfd;
    list-style: none;
}

.tree li {
    display: flex;
    align-items: center;
    height: 24px;
    padding-left: 24px;
}

.tree .root {
    padding-left: 4px;
}

.tree .sub {
    padding-left: 44px;
}

.tree .closed::before,
.tree .opened::before {
    content: "";
    width: 0;
    margin: 0 7px 0 -15px;
    border: 5px solid transparent;
    border-left: 8px solid #888;
    border-right: 0;
}

.tree .opened::before {
    margin: 0 6px 0 -16px;
    border: 5px solid transparent;
    border-top: 8px solid #888;
    border-bottom: 0;
}

.tree .ins {
    height: 12px;
}

.tree span {
    margin-left: 4px;
    padding: 4px 1px;
}

.tree .selected span {
    background-color: #b0e2ff;
    color: #111;
}

.viewport {
    position: relative;
    flex: 1;
    background-color: #e8eaed;
}

/* the part sits on a free canvas */
.model {
    position: absolute;
    left: 124px;
    top: 119px;
    width: 350px;
    height: 310px;
    shape-rendering: crispEdges;
}

.edge {
    stroke: #111;
    stroke-width: 3;
}

.edge.top { fill: #9aa7b6; }
.edge.left { fill: #8f9ba9; }
.edge.front { fill: #575e68; }

.cut {
    fill: none;
    stroke: #380060;
    stroke-width: 3;
}

.cut.picked {
    stroke: #00c800;
}

.state {
    position: absolute;
    left: 6px;
    bottom: 31px;
    color: #8b9099;
    font-size: 9px;
}

/* view manager */
.dialog {
    position: absolute;
    top: 18px;
    right: 84px;
    width: 354px;
    padding: 0 1px;
    border: 1px solid #fbfbfb;
    background-color: #eeeff1;
}

.dialog header {
    display: flex;
    align-items: center;
    height: 34px;
    margin-bottom: 1px;
    padding-left: 20px;
    padding-right: 10px;
    background-color: #e6e8e9;
}

.dialog header h2 {
    flex: 1;
    color: #9b9b9b;
    text-align: center;
}

.dialog header svg {
    width: 9px;
    height: 9px;
}

.dtabs {
    display: flex;
    height: 25px;
    margin-bottom: -1px;
}

.dtabs button {
    height: 25px;
    padding: 0 10px 0 9px;
    border: solid #c4c8cb;
    border-width: 1px 1px 0 0;
    color: #777;
}

.dtabs button:first-child {
    border-left-width: 1px;
}

.dtabs .active {
    position: relative;
    height: 26px;
    background-color: #fafafa;
    color: #111;
    font-weight: bold;
}

.dbody {
    padding: 8px 3px 0;
    border: 1px solid #c4c8cb;
    background-color: #fafafa;
}

.dbar {
    display: flex;
    gap: 4px;
    margin: 0 0 8px 1px;
}

.dbar button {
    justify-content: space-between;
    width: 58px;
    height: 28px;
    padding: 0 3px 0 9px;
    border: 1px solid #a9adb0;
}

.dbar .push {
    margin-left: 67px;
}

.dbar .option {
    width: 82px;
    padding-left: 12px;
}

.dbar svg {
    width: 14px;
    height: 8px;
}

.dlist {
    height: 248px;
    padding: 1px;
    border: 1px solid #a9adb0;
    background-color: #fff;
}

.dlist table {
    width: 100%;
    border-collapse: collapse;
}

.dlist th {
    width: 136px;
    height: 23px;
    padding: 0;
    border: solid #cfd1d3;
    border-width: 0 1px 1px 0;
    background-color: #fafafa;
    font-weight: normal;
    color: #222;
}

.dlist .fill {
    width: auto;
}

.dlist td {
    height: 25px;
    padding: 0 3px;
}

.dlist td svg {
    width: 14px;
    height: 8px;
    margin: 0 3px;
}

.dlist td .go {
    width: 12px;
    height: 12px;
    margin: 0 2px;
    vertical-align: middle;
}

.dlist .selected td:first-child {
    background-color: #b0e2ff;
    color: #111;
}

.dialog footer {
    display: flex;
    justify-content: flex-end;
    margin: 3px 5px 0;
    padding: 3px 0 4px;
    border-top: 1px solid #c4c8cb;
}

.dialog footer button {
    width: 44px;
    height: 25px;
    border: 1px solid #a9adb0;
    background-color: #fafafa;
}

/* status bar */
.status {
    display: flex;
    height: 36px;
    padding-bottom: 5px;
    border-top: 2px solid #969998;
    border-bottom: 1px solid #b5b8ba;
    background-color: #eeeff1;
}

.status button {
    width: 24px;
    height: 22px;
}

.left {
    display: flex;
    flex: 1;
    align-items: center;
    gap: 2px;
    padding-left: 5px;
    padding-top: 6px;
}

.left::after {
    content: "";
    width: 1px;
    height: 22px;
    margin-left: 6px;
    background-color: #a9adb0;
}

.center {
    display: flex;
    align-items: center;
    width: 408px;
    padding: 3px 0 0 2px;
    border: solid #a9adb0;
    border-width: 0 1px;
}

.center .wide {
    width: 38px;
    gap: 6px;
}

.find {
    display: flex;
    align-items: center;
    margin: 4px 0 0 40px;
    padding: 0 2px;
    border: solid #a9adb0;
    border-width: 0 1px;
}

.status .binoc {
    justify-content: space-between;
    width: 42px;
    height: 24px;
    padding: 0 3px 0 5px;
    border: 1px solid #c0c3c5;
    background: linear-gradient(#c0c3c5, #c0c3c5) 27px 0 / 1px 100% no-repeat #fafafa;
}

.count {
    padding: 9px 0 0 4px;
    width: 97px;
}

.pick {
    position: relative;
    width: 177px;
    margin-top: 4px;
}

.pick select {
    width: 100%;
    height: 24px;
    padding: 0 7px;
    border: 1px solid #a9adb0;
    border-radius: 0;
    background: linear-gradient(#b5b8ba, #b5b8ba) 160px 0 / 1px 100% no-repeat #fafafa;
    color: #222;
    font: inherit;
    appearance: none;
}

.pick .caret {
    position: absolute;
    right: 4px;
    top: 11px;
    pointer-events: none;
}

.grip {
    width: 12px;
    height: 12px;
    margin-left: 2px;
    align-self: flex-end;
}

/* forum mark over the lower right corner */
.watermark {
    position: fixed;
    right: 5px;
    bottom: 5px;
    display: flex;
    width: 206px;
    height: 62px;
    background-color: rgba(250, 250, 250, 0.35);
    pointer-events: none;
}

.watermark svg {
    width: 60px;
    height: 60px;
    opacity: 0.8;
}

.watermark strong {
    display: block;
    margin: 6px 0 0 9px;
    color: #90cfa9;
    font-size: 30px;
    line-height: 30px;
}

.watermark span {
    display: block;
    margin: 4px 0 0 -2px;
    color: #c5e4e0;
    font-size: 15px;
}
```
